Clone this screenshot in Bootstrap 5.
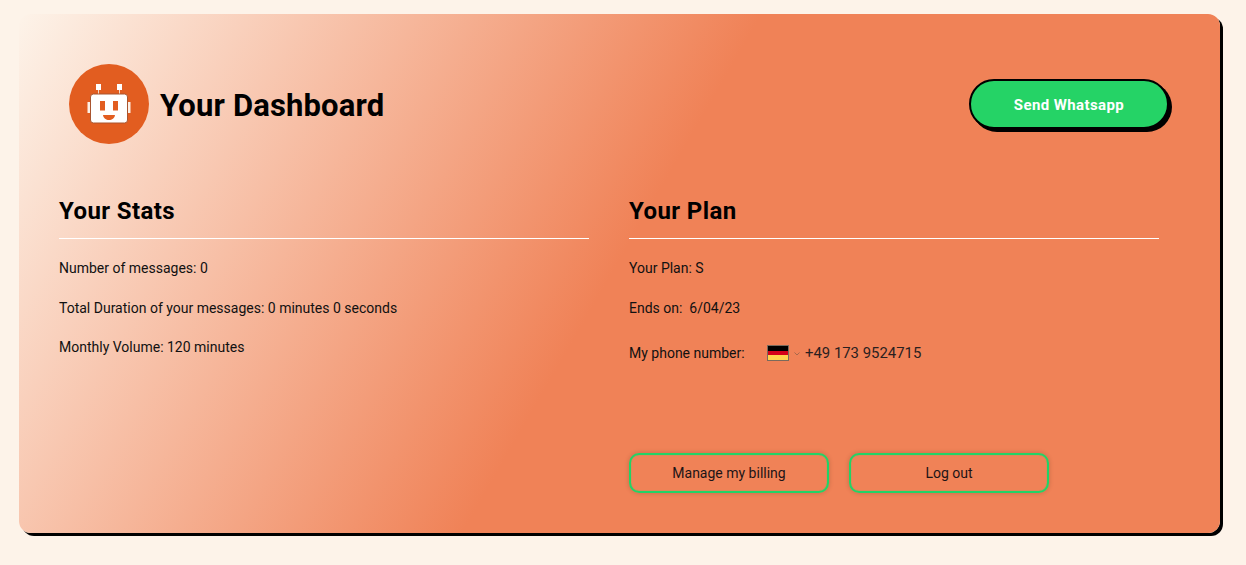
<!DOCTYPE html>
<html lang="en">
<head>
<meta charset="utf-8">
<title>Your Dashboard</title>
<link href="https://cdn.jsdelivr.net/npm/bootstrap@5.3.0/dist/css/bootstrap.min.css" rel="stylesheet">
<style>
html,body{height:100%;}
body{background:#fdf3e9;font-family:Roboto,"Noto Sans",sans-serif;font-size:14px;color:#111;overflow:hidden;}
.panel{margin:14px 26px 0 19px;height:519px;padding:0 40px;border-radius:12px;box-shadow:3px 3px 0 #000;background:linear-gradient(120deg,#fdf3e9 0%,#f08257 49.500%);}
.dash-head{height:180px;padding-left:10px;margin-right:11px;}
.bot{width:80px;height:80px;flex:none;}
.dash-title{font-size:31px;font-weight:700;line-height:1;margin:2px 0 0 11px;color:#000;letter-spacing:.15px;}
.wa-btn{width:200px;height:50px;border:2px solid #000;border-radius:25px;background:#25d366;color:#fff;font-weight:700;font-size:15px;box-shadow:3px 3px 0 #000;padding:2px 0 0;letter-spacing:.4px;}
.cols{gap:40px;}
.pane{width:530px;flex:none;}
.pane-title{font-size:24px;font-weight:700;line-height:28px;margin:3px 0 19px;padding-bottom:13px;border-bottom:1px solid #fff;color:#000;letter-spacing:.4px;}
.stat{margin:0;height:40px;line-height:20px;}
.stat-short{margin-top:-1px;}
.phone-line{height:30px;}
.phone-label{width:138px;}
.flag{width:22px;height:16px;border:1px solid #7a6a5c;background:linear-gradient(#000 0 33%,#d4001a 33% 66%,#ffd24d 66%);}
.chev{margin:1px 5px 0 5px;}
.phone-num{color:#2a2020;font-size:14.900px;padding-top:1px;}
.actions{gap:20px;margin-top:85px;}
.ghost-btn{width:200px;height:40px;border:2px solid #22d366;border-radius:10px;background:transparent;color:#1c1416;font-size:14px;padding:0;box-shadow:0 0 5px rgba(0,0,0,.18),inset 0 0 1px #22d366;}
</style>
</head>
<body>
<div class="panel">
  <div class="dash-head d-flex align-items-center justify-content-between">
    <div class="d-flex align-items-center">
      <svg class="bot" viewBox="0 0 80 80" aria-hidden="true">
        <circle cx="40" cy="40" r="40" fill="#e25d20"/>
        <path d="M29.500 25v6M50.500 25v6" stroke="#f4d9c8" stroke-width="1"/>
        <rect x="27" y="20" width="5" height="6" fill="#fff"/>
        <rect x="48" y="20" width="5" height="6" fill="#fff"/>
        <rect x="18.500" y="38" width="4" height="11" fill="#fdf0e6"/>
        <rect x="57.500" y="38" width="4" height="11" fill="#fdf0e6"/>
        <rect x="21.500" y="30" width="37" height="29" rx="3" fill="#fff" stroke="#a9552f" stroke-width="1"/>
        <rect x="31" y="37" width="5" height="9.500" fill="#e25d20"/>
        <rect x="44" y="37" width="5" height="9.500" fill="#e25d20"/>
        <path d="M34 51h12c-.5 3.500-3 5-6 5s-5.500-1.500-6-5z" fill="#e25d20"/>
      </svg>
      <h1 class="dash-title">Your Dashboard</h1>
    </div>
    <button type="button" class="btn wa-btn">Send Whatsapp</button>
  </div>
  <div class="d-flex cols">
    <section class="pane">
      <h2 class="pane-title">Your Stats</h2>
      <p class="stat">Number of messages: 0</p>
      <p class="stat">Total Duration of your messages: 0 minutes 0 seconds</p>
      <p class="stat stat-short">Monthly Volume: 120 minutes</p>
    </section>
    <section class="pane">
      <h2 class="pane-title">Your Plan</h2>
      <p class="stat">Your Plan: S</p>
      <p class="stat">Ends on:&nbsp; 6/04/23</p>
      <div class="phone-line d-flex align-items-center">
        <span class="phone-label">My phone number:</span>
        <span class="flag"></span>
        <svg class="chev" width="6" height="4" viewBox="0 0 6 4" aria-hidden="true"><path d="M.5.500 3 3 5.500.500" fill="none" stroke="#a8694c"/></svg>
        <span class="phone-num">+49 173 9524715</span>
      </div>
      <div class="d-flex actions">
        <button type="button" class="btn ghost-btn">Manage my billing</button>
        <button type="button" class="btn ghost-btn">Log out</button>
      </div>
    </section>
  </div>
</div>
<script src="https://cdn.jsdelivr.net/npm/bootstrap@5.3.0/dist/js/bootstrap.bundle.min.js"></script>
</body>
</html>
